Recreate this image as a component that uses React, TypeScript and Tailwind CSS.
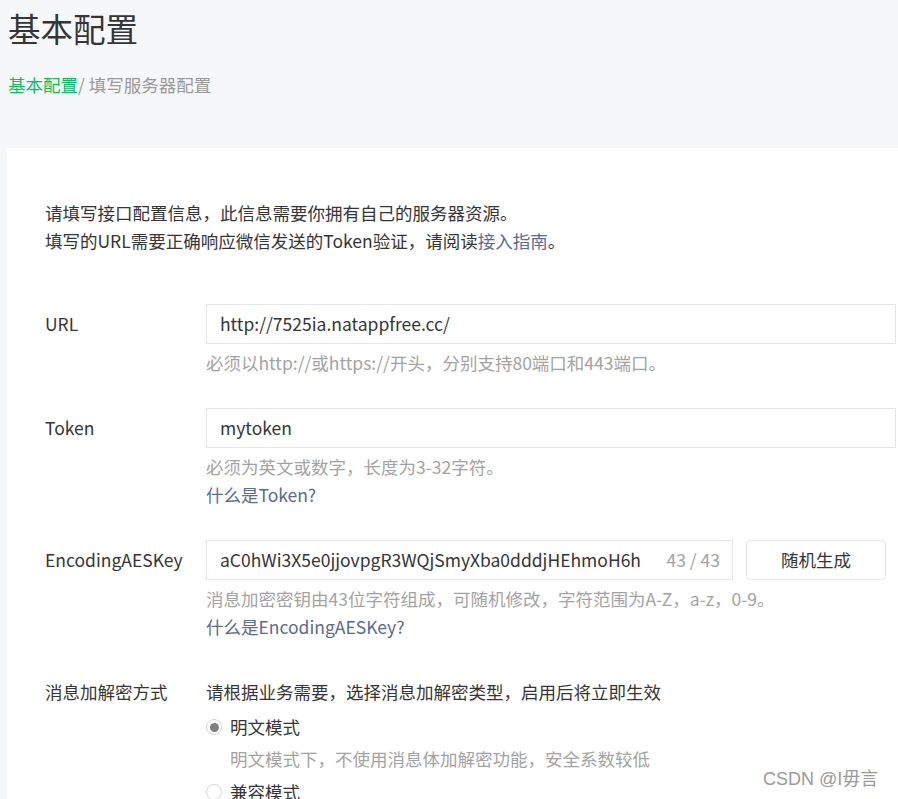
import React from "react";

const font = { fontFamily: '"Noto Sans CJK SC", "Noto Sans", sans-serif' };

function Row({ label, children, labelTop = false }: { label: string; children: React.ReactNode; labelTop?: boolean }) {
  return (
    <div className="flex">
      <div className={`w-[161px] shrink-0 text-[#353535] ${labelTop ? "leading-[28px]" : "leading-[40px]"}`}>{label}</div>
      <div className="flex-1 min-w-0">{children}</div>
    </div>
  );
}

function Input({ value }: { value: string }) {
  return (
    <div className="h-[40px] w-[690px] border border-[#e4e6eb] bg-white pl-[13px] leading-[38px] text-[#353535]">
      {value}
    </div>
  );
}

export default function App() {
  return (
    <div className="relative h-[799px] overflow-hidden bg-[#f6f7f9] text-[17.5px]" style={font}>
      <h1 className="pl-[8px] pt-[8px] text-[32.5px] leading-[40px] text-[#353535]">基本配置</h1>
      <div className="mt-[25px] pl-[8px] leading-[24px] text-[17.5px]">
        <span className="text-[#07c160]">基本配置</span>
        <span className="text-[#9a9a9a]">/ 填写服务器配置</span>
      </div>
      <div className="ml-[7px] mt-[51px] h-[700px] w-[920px] rounded-[4px] bg-white pl-[38px] pt-[51px]">
        <div className="leading-[28px] text-[#353535]">
          <p>请填写接口配置信息，此信息需要你拥有自己的服务器资源。</p>
          <p>
            填写的URL需要正确响应微信发送的Token验证，请阅读<span className="text-[#576b95]">接入指南</span>。
          </p>
        </div>

        <div className="mt-[49px]">
          <Row label="URL">
            <Input value="http://7525ia.natappfree.cc/" />
            <p className="mt-[5px] leading-[28px] text-[#a3a3a3]">必须以http://或https://开头，分别支持80端口和443端口。</p>
          </Row>
        </div>

        <div className="mt-[31px]">
          <Row label="Token">
            <Input value="mytoken" />
            <p className="mt-[5px] leading-[28px] text-[#a3a3a3]">必须为英文或数字，长度为3-32字符。</p>
            <p className="leading-[28px] text-[#576b95]">什么是Token?</p>
          </Row>
        </div>

        <div className="mt-[31px]">
          <Row label="EncodingAESKey">
            <div className="flex gap-[13px]">
              <div className="flex h-[40px] w-[527px] items-center border border-[#e4e6eb] bg-white pl-[13px] pr-[12px]">
                <div className="min-w-0 flex-1 overflow-hidden whitespace-nowrap text-[#353535]">
                  aC0hWi3X5e0jjovpgR3WQjSmyXba0dddjHEhmoH6h
                </div>
                <span className="ml-[6px] shrink-0 text-[#a3a3a3]">43 / 43</span>
              </div>
              <button className="h-[40px] w-[140px] rounded-[4px] border border-[#e4e6eb] bg-white text-[#353535]">
                随机生成
              </button>
            </div>
            <p className="mt-[5px] leading-[28px] text-[#a3a3a3]">消息加密密钥由43位字符组成，可随机修改，字符范围为A-Z，a-z，0-9。</p>
            <p className="leading-[28px] text-[#576b95]">什么是EncodingAESKey?</p>
          </Row>
        </div>

        <div className="mt-[37px]">
          <Row label="消息加解密方式" labelTop>
            <p className="leading-[28px] text-[#353535]">请根据业务需要，选择消息加解密类型，启用后将立即生效</p>
            <div className="mt-[7px] flex items-center gap-[8px] leading-[28px] text-[#353535]">
              <span className="flex h-[16px] w-[16px] items-center justify-center rounded-full border border-[#d6d6d6] bg-white">
                <span className="h-[9px] w-[9px] rounded-full bg-[#7f7f7f]" />
              </span>
              明文模式
            </div>
            <p className="mt-[4px] pl-[24px] leading-[28px] text-[#a3a3a3]">明文模式下，不使用消息体加解密功能，安全系数较低</p>
            <div className="mt-[5px] flex items-center gap-[8px] leading-[28px] text-[#353535]">
              <span className="h-[16px] w-[16px] rounded-full border border-[#d6d6d6] bg-white" />
              兼容模式
            </div>
          </Row>
        </div>
      </div>
      <div
        className="absolute left-[763px] top-[768px] text-[18px] leading-[22px] text-[#9a9a9a]"
        style={{ fontFamily: '"Liberation Sans", "Noto Sans CJK SC", sans-serif' }}
      >
        CSDN @I毋言
      </div>
    </div>
  );
}
